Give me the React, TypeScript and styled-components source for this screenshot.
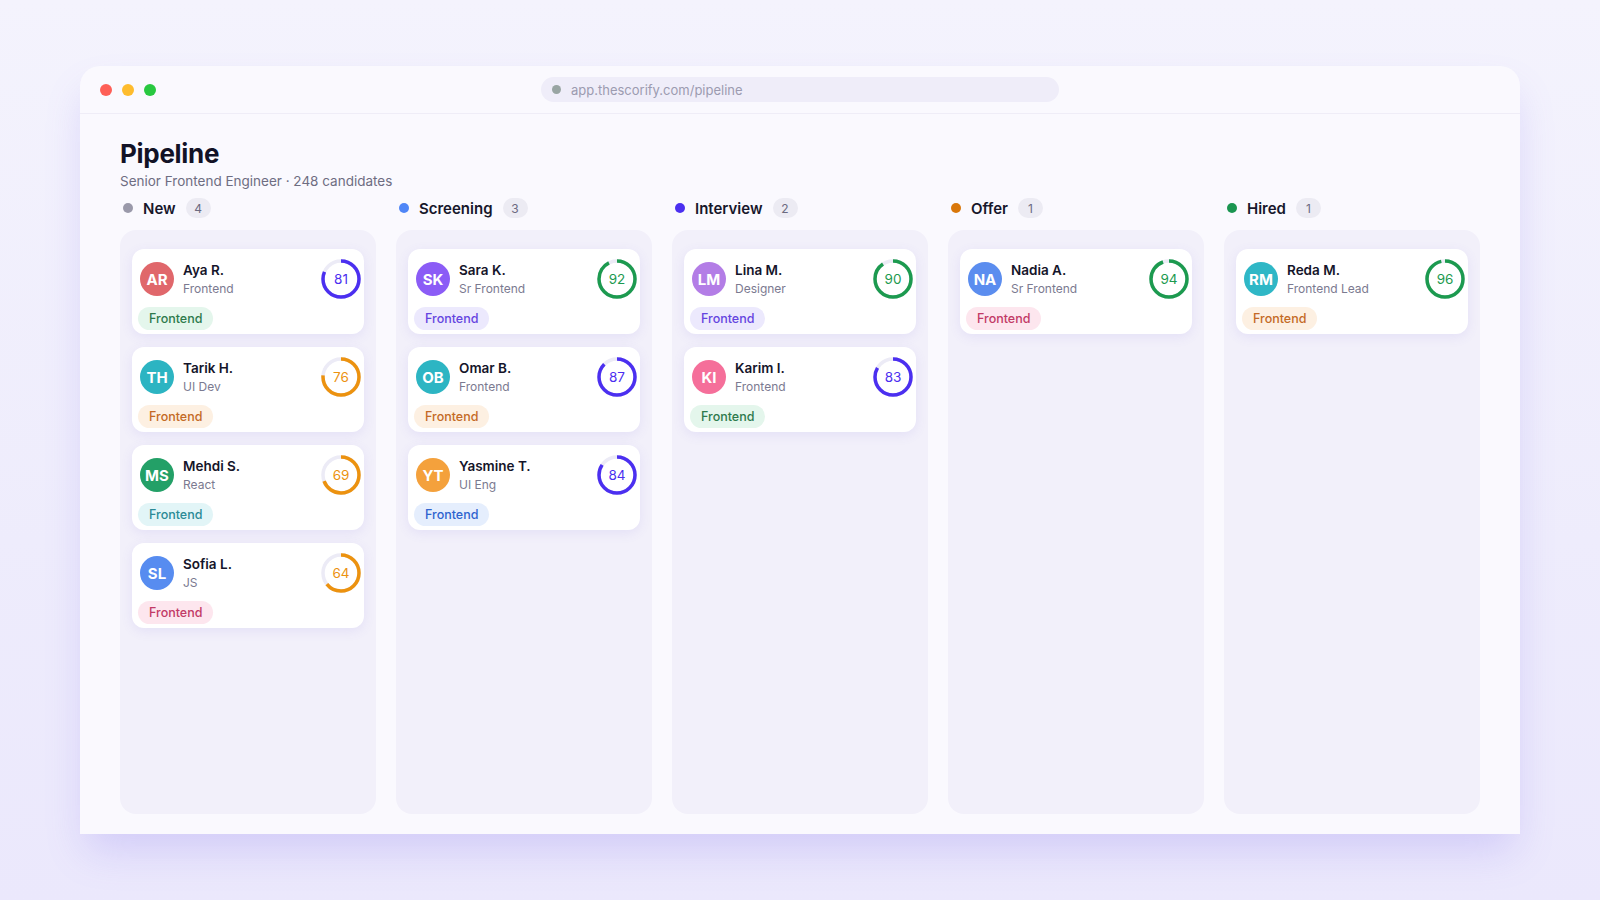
import styled, { createGlobalStyle } from "styled-components";

const GlobalStyle = createGlobalStyle`
  * { box-sizing: border-box; }
  body {
    margin: 0;
    font-family: Inter, "Noto Sans", "Liberation Sans", sans-serif;
    background: linear-gradient(180deg, #f4f3fd 0%, #eeecfc 60%, #ebe8fc 100%);
    color: #16162a;
  }
`;

const Page = styled.div`
  min-height: 100vh;
  padding: 66px 80px 0;
`;

const Window = styled.div`
  width: 1440px;
  height: 768px;
  background: #faf9fe;
  border-radius: 20px 20px 0 0;
  box-shadow: 0 22px 40px -6px rgba(120, 100, 235, 0.22);
  display: flex;
  flex-direction: column;
`;

const TitleBar = styled.div`
  height: 48px;
  border-bottom: 1px solid #efedf7;
  display: grid;
  grid-template-columns: 1fr 518px 1fr;
  align-items: center;
  padding: 0 20px;
`;

const Lights = styled.div`
  display: flex;
  gap: 10px;
`;

const Light = styled.span<{ $c: string }>`
  width: 12px;
  height: 12px;
  border-radius: 50%;
  background: ${(p) => p.$c};
`;

const UrlBar = styled.div`
  height: 25px;
  border-radius: 13px;
  background: #efedf9;
  display: flex;
  align-items: center;
  gap: 10px;
  padding-left: 11px;
  font-size: 13px;
  color: #9c9bb0;
`;

const UrlDot = styled.span`
  width: 9px;
  height: 9px;
  border-radius: 50%;
  background: #99a5a3;
`;

const Content = styled.div`
  flex: 1;
  display: flex;
  flex-direction: column;
  padding: 24px 40px 20px;
  min-height: 0;
`;

const Title = styled.h1`
  margin: 0;
  font-size: 26px;
  line-height: 32px;
  font-weight: 700;
  letter-spacing: -0.3px;
  color: #121226;
`;

const Subtitle = styled.div`
  margin-top: 2px;
  font-size: 13.5px;
  line-height: 18px;
  color: #6e6d82;
`;

const Board = styled.div`
  margin-top: 7px;
  flex: 1;
  display: grid;
  grid-template-columns: repeat(5, 1fr);
  gap: 20px;
  min-height: 0;
`;

const Column = styled.div`
  display: flex;
  flex-direction: column;
  min-height: 0;
`;

const ColumnHeader = styled.div`
  height: 22px;
  display: flex;
  align-items: center;
  padding-left: 3px;
  margin-bottom: 11px;
`;

const StageDot = styled.span<{ $c: string }>`
  width: 10px;
  height: 10px;
  border-radius: 50%;
  background: ${(p) => p.$c};
  margin-right: 10px;
`;

const StageName = styled.span`
  font-size: 15px;
  font-weight: 600;
  color: #17172b;
`;

const CountBadge = styled.span`
  margin-left: 10px;
  min-width: 25px;
  height: 20px;
  border-radius: 10px;
  background: #ecebf3;
  color: #6b6a80;
  font-size: 12px;
  display: flex;
  align-items: center;
  justify-content: center;
`;

const ColumnBody = styled.div`
  flex: 1;
  background: #f2f0fa;
  border-radius: 16px;
  padding: 19px 12px 17px;
  display: flex;
  flex-direction: column;
  gap: 13px;
`;

const Card = styled.div`
  background: #ffffff;
  border-radius: 12px;
  padding: 10px 3px 4px 6px;
  box-shadow: 0 3px 12px rgba(112, 92, 220, 0.1);
`;

const CardTop = styled.div`
  display: flex;
  align-items: center;
  height: 40px;
`;

const Avatar = styled.div<{ $c: string }>`
  width: 34px;
  height: 34px;
  border-radius: 50%;
  margin-left: 2px;
  background: ${(p) => p.$c};
  color: #fff;
  font-size: 15px;
  font-weight: 700;
  display: flex;
  align-items: center;
  justify-content: center;
  flex-shrink: 0;
`;

const Who = styled.div`
  margin-left: 9px;
  flex: 1;
  display: flex;
  flex-direction: column;
  gap: 3px;
`;

const Name = styled.div`
  font-size: 13.5px;
  line-height: 16px;
  font-weight: 600;
  color: #15152a;
`;

const Role = styled.div`
  font-size: 12px;
  line-height: 16px;
  color: #7b7a90;
`;

const RingWrap = styled.div`
  position: relative;
  width: 40px;
  height: 40px;
  flex-shrink: 0;
`;

const RingLabel = styled.span<{ $c: string }>`
  position: absolute;
  inset: 0;
  display: flex;
  align-items: center;
  justify-content: center;
  font-size: 13.5px;
  color: ${(p) => p.$c};
`;

const Tag = styled.span<{ $bg: string; $fg: string }>`
  margin-top: 8px;
  display: inline-flex;
  align-items: center;
  height: 23px;
  padding: 0 11px;
  border-radius: 12px;
  font-size: 12.5px;
  font-weight: 500;
  background: ${(p) => p.$bg};
  color: ${(p) => p.$fg};
`;

const tagColors: Record<string, [string, string]> = {
  green: ["#e4f6ec", "#2e7a4c"],
  orange: ["#fdf0e2", "#c46a26"],
  teal: ["#e2f5f7", "#2b8a96"],
  pink: ["#fde6ee", "#c23a66"],
  violet: ["#ece9fd", "#6545e0"],
  blue: ["#e5eefd", "#2f64cf"],
};

const scoreColor = (s: number) =>
  s >= 90 ? "#1c9a4f" : s >= 80 ? "#4b2ff0" : "#ec920f";

type Candidate = {
  initials: string;
  name: string;
  role: string;
  avatar: string;
  score: number;
  tag: string;
};

const Ring = ({ score }: { score: number }) => {
  const r = 18;
  const len = 2 * Math.PI * r;
  const c = scoreColor(score);
  return (
    <RingWrap>
      <svg width="40" height="40" viewBox="0 0 40 40">
        <circle cx="20" cy="20" r={r} fill="none" stroke="#ecebf6" strokeWidth="3.5" />
        <circle
          cx="20"
          cy="20"
          r={r}
          fill="none"
          stroke={c}
          strokeWidth="3.5"
          strokeDasharray={`${(len * score) / 100} ${len}`}
          transform="rotate(-90 20 20)"
        />
      </svg>
      <RingLabel $c={c}>{score}</RingLabel>
    </RingWrap>
  );
};

const CandidateCard = ({ c }: { c: Candidate }) => {
  const [bg, fg] = tagColors[c.tag];
  return (
    <Card>
      <CardTop>
        <Avatar $c={c.avatar}>{c.initials}</Avatar>
        <Who>
          <Name>{c.name}</Name>
          <Role>{c.role}</Role>
        </Who>
        <Ring score={c.score} />
      </CardTop>
      <Tag $bg={bg} $fg={fg}>Frontend</Tag>
    </Card>
  );
};

const stages: { name: string; dot: string; items: Candidate[] }[] = [
  {
    name: "New",
    dot: "#9a99aa",
    items: [
      { initials: "AR", name: "Aya R.", role: "Frontend", avatar: "#e0676b", score: 81, tag: "green" },
      { initials: "TH", name: "Tarik H.", role: "UI Dev", avatar: "#2cb4c2", score: 76, tag: "orange" },
      { initials: "MS", name: "Mehdi S.", role: "React", avatar: "#23a067", score: 69, tag: "teal" },
      { initials: "SL", name: "Sofia L.", role: "JS", avatar: "#578cf0", score: 64, tag: "pink" },
    ],
  },
  {
    name: "Screening",
    dot: "#4f86f7",
    items: [
      { initials: "SK", name: "Sara K.", role: "Sr Frontend", avatar: "#8b5cf6", score: 92, tag: "violet" },
      { initials: "OB", name: "Omar B.", role: "Frontend", avatar: "#2db5c3", score: 87, tag: "orange" },
      { initials: "YT", name: "Yasmine T.", role: "UI Eng", avatar: "#f4a13c", score: 84, tag: "blue" },
    ],
  },
  {
    name: "Interview",
    dot: "#4b2ff0",
    items: [
      { initials: "LM", name: "Lina M.", role: "Designer", avatar: "#b37de6", score: 90, tag: "violet" },
      { initials: "KI", name: "Karim I.", role: "Frontend", avatar: "#f56f9a", score: 83, tag: "green" },
    ],
  },
  {
    name: "Offer",
    dot: "#d9770a",
    items: [
      { initials: "NA", name: "Nadia A.", role: "Sr Frontend", avatar: "#5b8def", score: 94, tag: "pink" },
    ],
  },
  {
    name: "Hired",
    dot: "#1a9550",
    items: [
      { initials: "RM", name: "Reda M.", role: "Frontend Lead", avatar: "#2fb7c6", score: 96, tag: "orange" },
    ],
  },
];

const App = () => (
  <>
    <GlobalStyle />
    <Page>
      <Window>
        <TitleBar>
          <Lights>
            <Light $c="#fe5f57" />
            <Light $c="#febc2e" />
            <Light $c="#28c840" />
          </Lights>
          <UrlBar>
            <UrlDot />
            app.thescorify.com/pipeline
          </UrlBar>
          <div />
        </TitleBar>
        <Content>
          <Title>Pipeline</Title>
          <Subtitle>Senior Frontend Engineer · 248 candidates</Subtitle>
          <Board>
            {stages.map((s) => (
              <Column key={s.name}>
                <ColumnHeader>
                  <StageDot $c={s.dot} />
                  <StageName>{s.name}</StageName>
                  <CountBadge>{s.items.length}</CountBadge>
                </ColumnHeader>
                <ColumnBody>
                  {s.items.map((c) => (
                    <CandidateCard key={c.initials} c={c} />
                  ))}
                </ColumnBody>
              </Column>
            ))}
          </Board>
        </Content>
      </Window>
    </Page>
  </>
);

export default App;
